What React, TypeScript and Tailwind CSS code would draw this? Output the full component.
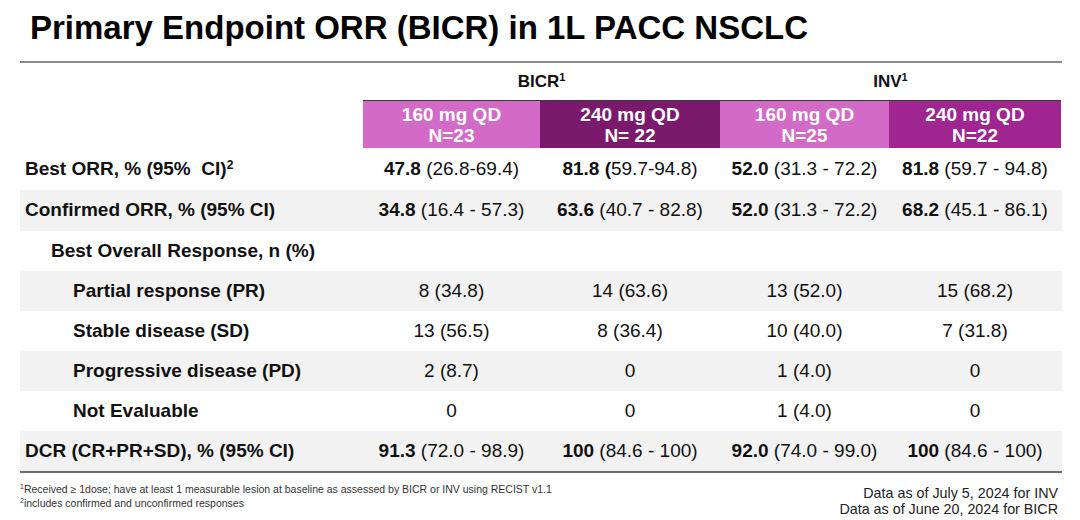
const COLS = [
  { dose: "160 mg QD", n: "N=23", bg: "bg-[#d46ac7]", w: "w-[177px]" },
  { dose: "240 mg QD", n: "N= 22", bg: "bg-[#7b1a6d]", w: "w-[180px]" },
  { dose: "160 mg QD", n: "N=25", bg: "bg-[#d46ac7]", w: "w-[169px]" },
  { dose: "240 mg QD", n: "N=22", bg: "bg-[#9f2591]", w: "w-[172px]" },
];

const WIDTHS = ["w-[177px]", "w-[180px]", "w-[169px]", "w-[172px]"];

type Cell = { b?: string; r?: string };

type Row = {
  label: React.ReactNode;
  indent: string;
  shaded: boolean;
  h: string;
  cells: Cell[];
};

const ROWS: Row[] = [
  {
    label: (
      <>
        Best ORR, % (95%&nbsp; CI)<span className="text-[12px] align-[6px] leading-none">2</span>
      </>
    ),
    indent: "pl-[5px]",
    shaded: false,
    h: "h-[42px]",
    cells: [
      { b: "47.8", r: " (26.8-69.4)" },
      { b: "81.8 (", r: "59.7-94.8)" },
      { b: "52.0", r: " (31.3 - 72.2)" },
      { b: "81.8", r: " (59.7 - 94.8)" },
    ],
  },
  {
    label: "Confirmed ORR, % (95% CI)",
    indent: "pl-[5px]",
    shaded: true,
    h: "h-[41px]",
    cells: [
      { b: "34.8", r: " (16.4 - 57.3)" },
      { b: "63.6", r: " (40.7 - 82.8)" },
      { b: "52.0", r: " (31.3 - 72.2)" },
      { b: "68.2", r: " (45.1 - 86.1)" },
    ],
  },
  {
    label: "Best Overall Response, n (%)",
    indent: "pl-[31px]",
    shaded: false,
    h: "h-[40px]",
    cells: [{}, {}, {}, {}],
  },
  {
    label: "Partial response (PR)",
    indent: "pl-[53px]",
    shaded: true,
    h: "h-[40px]",
    cells: [{ r: "8 (34.8)" }, { r: "14 (63.6)" }, { r: "13 (52.0)" }, { r: "15 (68.2)" }],
  },
  {
    label: "Stable disease (SD)",
    indent: "pl-[53px]",
    shaded: false,
    h: "h-[40px]",
    cells: [{ r: "13 (56.5)" }, { r: "8 (36.4)" }, { r: "10 (40.0)" }, { r: "7 (31.8)" }],
  },
  {
    label: "Progressive disease (PD)",
    indent: "pl-[53px]",
    shaded: true,
    h: "h-[40px]",
    cells: [{ r: "2 (8.7)" }, { r: "0" }, { r: "1 (4.0)" }, { r: "0" }],
  },
  {
    label: "Not Evaluable",
    indent: "pl-[53px]",
    shaded: false,
    h: "h-[40px]",
    cells: [{ r: "0" }, { r: "0" }, { r: "1 (4.0)" }, { r: "0" }],
  },
  {
    label: "DCR (CR+PR+SD), % (95% CI)",
    indent: "pl-[5px]",
    shaded: true,
    h: "h-[40px]",
    cells: [
      { b: "91.3", r: " (72.0 - 98.9)" },
      { b: "100", r: " (84.6 - 100)" },
      { b: "92.0", r: " (74.0 - 99.0)" },
      { b: "100", r: " (84.6 - 100)" },
    ],
  },
];

export default function App() {
  return (
    <div className="w-[1080px] h-[520px] bg-white text-[#111] overflow-hidden font-['Liberation_Sans',Arial,sans-serif]">
      {/* title */}
      <h1 className="pl-[30px] pt-[8px] h-[61px] text-[33px] font-bold leading-[40px] text-black">
        Primary Endpoint ORR (BICR) in 1L PACC NSCLC
      </h1>

      <div className="ml-[20px] w-[1042px]">
        <div className="h-[2px] bg-[#8a8a8a]" />

        {/* group headers */}
        <div className="flex h-[37px] items-center text-[17px] font-bold">
          <div className="w-[343px]" />
          <div className="w-[357px] text-center">
            BICR<span className="text-[11px] align-[6px] leading-none">1</span>
          </div>
          <div className="w-[341px] text-center">
            INV<span className="text-[11px] align-[6px] leading-none">1</span>
          </div>
        </div>

        {/* dose headers */}
        <div className="flex">
          <div className="w-[343px]" />
          <div className="flex border-t border-[#3a3a3a]">
            {COLS.map((c, i) => (
              <div
                key={i}
                className={`${c.w} ${c.bg} h-[47px] flex flex-col items-center justify-center text-white font-bold text-[19px] leading-[21px]`}
              >
                <span>{c.dose}</span>
                <span>{c.n}</span>
              </div>
            ))}
          </div>
        </div>

        {/* rows */}
        {ROWS.map((row, ri) => (
          <div
            key={ri}
            className={`flex items-center ${row.h} text-[19px] ${row.shaded ? "bg-[#f2f2f2]" : ""}`}
          >
            <div className={`w-[343px] ${row.indent} font-bold whitespace-nowrap`}>{row.label}</div>
            {row.cells.map((c, ci) => (
              <div key={ci} className={`${WIDTHS[ci]} text-center whitespace-nowrap`}>
                {c.b && <span className="font-bold">{c.b}</span>}
                {c.r && <span>{c.r}</span>}
              </div>
            ))}
          </div>
        ))}

        <div className="h-[2px] bg-[#6e6e6e]" />

        {/* footnotes */}
        <div className="flex justify-between pt-[9px]">
          <div className="text-[10.5px] leading-[14px] text-[#333]">
            <div>
              <span className="text-[7px] align-[4px] leading-none">1</span>Received ≥ 1dose; have at least 1 measurable lesion at baseline as assessed by BICR or INV using RECIST v1.1
            </div>
            <div>
              <span className="text-[7px] align-[4px] leading-none">2</span>includes confirmed and unconfirmed responses
            </div>
          </div>
          <div className="text-right text-[14.3px] leading-[16px] text-[#222] pt-[3px] mr-[4px]">
            <div>Data as of July 5, 2024 for INV</div>
            <div>Data as of June 20, 2024 for BICR</div>
          </div>
        </div>
      </div>
    </div>
  );
}
